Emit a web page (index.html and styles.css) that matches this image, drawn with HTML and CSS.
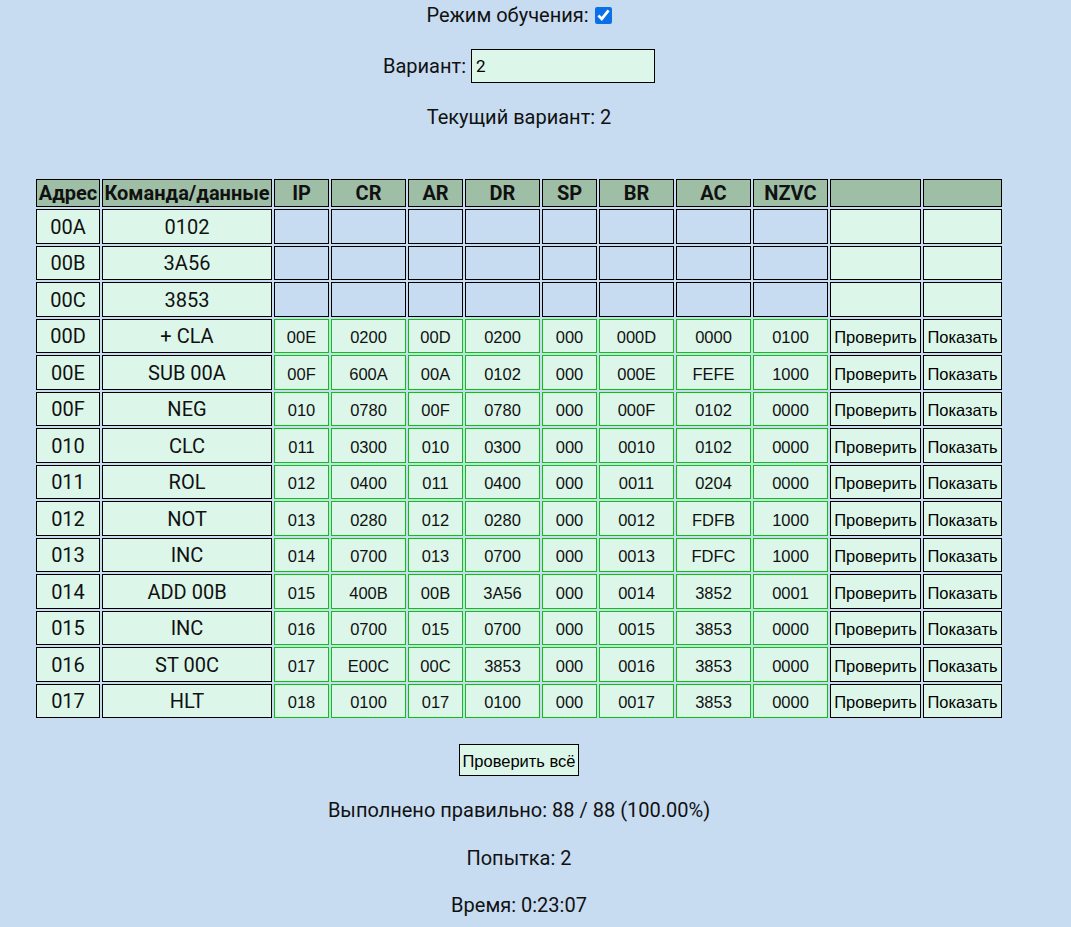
FILE: index.html
```html
<!DOCTYPE html>
<html lang="ru">
<head>
<meta charset="utf-8">
<title>Трассировка</title>
<link rel="stylesheet" href="styles.css">
</head>
<body>
<div class="page">
  <div class="line mode"><label>Режим обучения: <input type="checkbox" class="chk" checked></label></div>
  <div class="line variant"><label>Вариант: <input class="variant-input" type="text" value="2"></label></div>
  <p class="text current">Текущий вариант: 2</p>

  <table class="trace">
    <colgroup>
      <col class="c-addr"><col class="c-cmd"><col class="c-s"><col class="c-m"><col class="c-s"><col class="c-m"><col class="c-s"><col class="c-m"><col class="c-m"><col class="c-m"><col class="c-b1"><col class="c-b2">
    </colgroup>
    <thead>
      <tr><th>Адрес</th><th>Команда/данные</th><th>IP</th><th>CR</th><th>AR</th><th>DR</th><th>SP</th><th>BR</th><th>AC</th><th>NZVC</th><th></th><th></th></tr>
    </thead>
    <tbody>
      <tr class="data"><td class="mem">00A</td><td class="mem">0102</td><td class="empty"></td><td class="empty"></td><td class="empty"></td><td class="empty"></td><td class="empty"></td><td class="empty"></td><td class="empty"></td><td class="empty"></td><td class="act"></td><td class="act"></td></tr>
      <tr class="data"><td class="mem">00B</td><td class="mem">3A56</td><td class="empty"></td><td class="empty"></td><td class="empty"></td><td class="empty"></td><td class="empty"></td><td class="empty"></td><td class="empty"></td><td class="empty"></td><td class="act"></td><td class="act"></td></tr>
      <tr class="data"><td class="mem">00C</td><td class="mem">3853</td><td class="empty"></td><td class="empty"></td><td class="empty"></td><td class="empty"></td><td class="empty"></td><td class="empty"></td><td class="empty"></td><td class="empty"></td><td class="act"></td><td class="act"></td></tr>
      <tr class="data"><td class="mem">00D</td><td class="mem">+ CLA</td><td class="reg">00E</td><td class="reg">0200</td><td class="reg">00D</td><td class="reg">0200</td><td class="reg">000</td><td class="reg">000D</td><td class="reg">0000</td><td class="reg">0100</td><td class="act"><button class="cell-btn">Проверить</button></td><td class="act"><button class="cell-btn">Показать</button></td></tr>
      <tr class="data"><td class="mem">00E</td><td class="mem">SUB 00A</td><td class="reg">00F</td><td class="reg">600A</td><td class="reg">00A</td><td class="reg">0102</td><td class="reg">000</td><td class="reg">000E</td><td class="reg">FEFE</td><td class="reg">1000</td><td class="act"><button class="cell-btn">Проверить</button></td><td class="act"><button class="cell-btn">Показать</button></td></tr>
      <tr class="data"><td class="mem">00F</td><td class="mem">NEG</td><td class="reg">010</td><td class="reg">0780</td><td class="reg">00F</td><td class="reg">0780</td><td class="reg">000</td><td class="reg">000F</td><td class="reg">0102</td><td class="reg">0000</td><td class="act"><button class="cell-btn">Проверить</button></td><td class="act"><button class="cell-btn">Показать</button></td></tr>
      <tr class="data"><td class="mem">010</td><td class="mem">CLC</td><td class="reg">011</td><td class="reg">0300</td><td class="reg">010</td><td class="reg">0300</td><td class="reg">000</td><td class="reg">0010</td><td class="reg">0102</td><td class="reg">0000</td><td class="act"><button class="cell-btn">Проверить</button></td><td class="act"><button class="cell-btn">Показать</button></td></tr>
      <tr class="data"><td class="mem">011</td><td class="mem">ROL</td><td class="reg">012</td><td class="reg">0400</td><td class="reg">011</td><td class="reg">0400</td><td class="reg">000</td><td class="reg">0011</td><td class="reg">0204</td><td class="reg">0000</td><td class="act"><button class="cell-btn">Проверить</button></td><td class="act"><button class="cell-btn">Показать</button></td></tr>
      <tr class="data"><td class="mem">012</td><td class="mem">NOT</td><td class="reg">013</td><td class="reg">0280</td><td class="reg">012</td><td class="reg">0280</td><td class="reg">000</td><td class="reg">0012</td><td class="reg">FDFB</td><td class="reg">1000</td><td class="act"><button class="cell-btn">Проверить</button></td><td class="act"><button class="cell-btn">Показать</button></td></tr>
      <tr class="data"><td class="mem">013</td><td class="mem">INC</td><td class="reg">014</td><td class="reg">0700</td><td class="reg">013</td><td class="reg">0700</td><td class="reg">000</td><td class="reg">0013</td><td class="reg">FDFC</td><td class="reg">1000</td><td class="act"><button class="cell-btn">Проверить</button></td><td class="act"><button class="cell-btn">Показать</button></td></tr>
      <tr class="data"><td class="mem">014</td><td class="mem">ADD 00B</td><td class="reg">015</td><td class="reg">400B</td><td class="reg">00B</td><td class="reg">3A56</td><td class="reg">000</td><td class="reg">0014</td><td class="reg">3852</td><td class="reg">0001</td><td class="act"><button class="cell-btn">Проверить</button></td><td class="act"><button class="cell-btn">Показать</button></td></tr>
      <tr class="data"><td class="mem">015</td><td class="mem">INC</td><td class="reg">016</td><td class="reg">0700</td><td class="reg">015</td><td class="reg">0700</td><td class="reg">000</td><td class="reg">0015</td><td class="reg">3853</td><td class="reg">0000</td><td class="act"><button class="cell-btn">Проверить</button></td><td class="act"><button class="cell-btn">Показать</button></td></tr>
      <tr class="data"><td class="mem">016</td><td class="mem">ST 00C</td><td class="reg">017</td><td class="reg">E00C</td><td class="reg">00C</td><td class="reg">3853</td><td class="reg">000</td><td class="reg">0016</td><td class="reg">3853</td><td class="reg">0000</td><td class="act"><button class="cell-btn">Проверить</button></td><td class="act"><button class="cell-btn">Показать</button></td></tr>
      <tr class="data"><td class="mem">017</td><td class="mem">HLT</td><td class="reg">018</td><td class="reg">0100</td><td class="reg">017</td><td class="reg">0100</td><td class="reg">000</td><td class="reg">0017</td><td class="reg">3853</td><td class="reg">0000</td><td class="act"><button class="cell-btn">Проверить</button></td><td class="act"><button class="cell-btn">Показать</button></td></tr>
    </tbody>
  </table>

  <div class="line actions"><button class="check-all">Проверить всё</button></div>
  <p class="text stat first">Выполнено правильно: 88 / 88 (100.00%)</p>
  <p class="text stat">Попытка: 2</p>
  <p class="text stat">Время: 0:23:07</p>
</div>
</body>
</html>
```

FILE: styles.css
```css
html, body {
  margin: 0;
  padding: 0;
  background: #c7dcf1;
}

body {
  font-family: Roboto, "Liberation Sans", sans-serif;
  font-size: 20px;
  color: #111;
}

.page {
  width: 1038px;
  text-align: center;
}

.line {
  display: flex;
  justify-content: center;
  align-items: center;
}

.mode {
  height: 30px;
}

.mode label,
.variant label {
  display: flex;
  align-items: center;
}

.chk {
  width: 17px;
  height: 17px;
  margin: 1px 0 0 6px;
  accent-color: #0b6fe8;
}

.variant {
  margin-top: 19px;
  height: 34px;
}

.variant-input {
  box-sizing: border-box;
  width: 184px;
  height: 34px;
  margin-left: 5px;
  padding: 0 4px;
  border: 1px solid #000;
  background: #dcf7e9;
  font-family: Roboto, "Liberation Sans", sans-serif;
  font-size: 17px;
  color: #000;
  outline: none;
}

.text {
  margin: 0;
  line-height: 23.4px;
}

.current {
  margin-top: 23px;
}

.trace {
  table-layout: fixed;
  width: 970px;
  margin: 47.5px auto 0;
  border-collapse: separate;
  border-spacing: 2px;
}

.c-addr { width: 64px; }
.c-cmd { width: 170px; }
.c-s { width: 55px; }
.c-m { width: 75px; }
.c-b1 { width: 91px; }
.c-b2 { width: 79px; }

.trace th,
.trace td {
  box-sizing: border-box;
  padding: 0;
  border: 1px solid #000;
  text-align: center;
  white-space: nowrap;
  overflow: hidden;
}

.trace thead tr {
  height: 28.5px;
}

.trace th {
  background: #9ebea5;
  font-weight: bold;
}

.trace tr.data {
  height: 34.5px;
}

.trace td.mem {
  background: #dcf7e9;
}

.trace td.empty {
  background: transparent;
}

.trace td.reg {
  background: #dcf7e9;
  border-color: #10c010;
  font-family: "Liberation Sans", Arial, sans-serif;
  font-size: 16.5px;
  padding-top: 3px;
}

.trace td.act {
  background: #dcf7e9;
}

.cell-btn {
  display: block;
  width: 100%;
  height: 100%;
  margin: 0;
  padding: 3px 0 0;
  border: 0;
  background: transparent;
  font-family: "Liberation Sans", Arial, sans-serif;
  font-size: 16.5px;
  color: #000;
  white-space: nowrap;
}

.actions {
  margin-top: 24px;
}

.check-all {
  box-sizing: border-box;
  width: 120px;
  height: 32px;
  margin: 0;
  padding: 2px 0 0;
  border: 1px solid #000;
  background: #dcf7e9;
  font-family: "Liberation Sans", Arial, sans-serif;
  font-size: 16.5px;
  color: #000;
  white-space: nowrap;
}

.stat {
  margin-top: 24px;
}

.stat.first {
  margin-top: 23px;
}
```
